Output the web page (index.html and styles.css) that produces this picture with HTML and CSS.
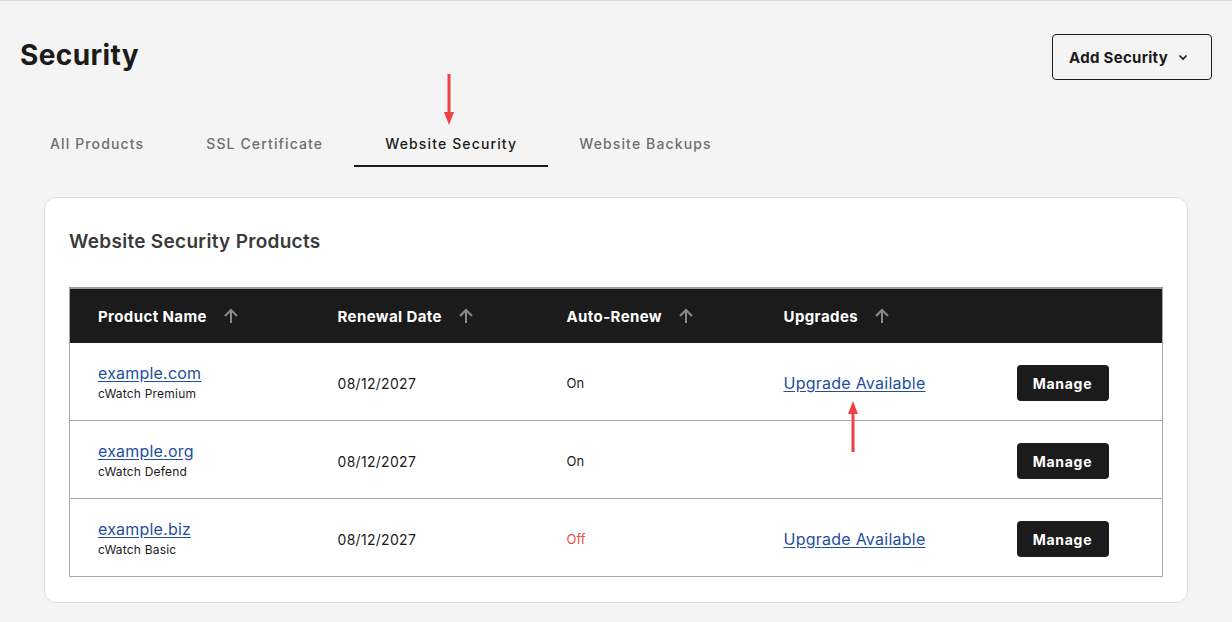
FILE: index.html
```html
<!DOCTYPE html>
<html lang="en">
<head>
    <meta charset="UTF-8">
    <meta name="viewport" content="width=device-width, initial-scale=1.0">
    <title>Security</title>
    <link rel="stylesheet" href="styles.css">
</head>
<body>
    <div class="page">
        <div class="top">
            <h1>Security</h1>
            <button type="button" class="add-btn">Add Security
                <svg width="12" height="12" viewBox="0 0 12 12"><path d="M2.5 4.5 L6 8 L9.5 4.5" fill="none" stroke="#1b1b1b" stroke-width="1.6"/></svg>
            </button>
        </div>

        <div class="tabs">
            <div class="tab">All Products</div>
            <div class="tab">SSL Certificate</div>
            <div class="tab active">Website Security
                <svg class="mark mark-down" width="12" height="52" viewBox="0 0 12 52"><path d="M6 0 V40" stroke="#ef4046" stroke-width="3"/><path d="M1 38 L6 51 L11 38 Z" fill="#ef4046"/></svg>
            </div>
            <div class="tab">Website Backups</div>
        </div>

        <div class="card">
            <h2>Website Security Products</h2>
            <table>
                <colgroup>
                    <col style="width:240px">
                    <col style="width:229px">
                    <col style="width:217px">
                    <col style="width:233px">
                    <col>
                </colgroup>
                <thead>
                    <tr>
                        <th>Product Name <svg class="sort" width="16" height="16" viewBox="0 0 16 16"><path d="M8 15 V2 M2 8 L8 2 L14 8" fill="none" stroke="#8a8a8a" stroke-width="2"/></svg></th>
                        <th>Renewal Date <svg class="sort" width="16" height="16" viewBox="0 0 16 16"><path d="M8 15 V2 M2 8 L8 2 L14 8" fill="none" stroke="#8a8a8a" stroke-width="2"/></svg></th>
                        <th>Auto-Renew <svg class="sort" width="16" height="16" viewBox="0 0 16 16"><path d="M8 15 V2 M2 8 L8 2 L14 8" fill="none" stroke="#8a8a8a" stroke-width="2"/></svg></th>
                        <th>Upgrades <svg class="sort" width="16" height="16" viewBox="0 0 16 16"><path d="M8 15 V2 M2 8 L8 2 L14 8" fill="none" stroke="#8a8a8a" stroke-width="2"/></svg></th>
                        <th></th>
                    </tr>
                </thead>
                <tbody>
                    <tr>
                        <td class="name"><a href="#" class="domain">example.com</a><div class="plan">cWatch Premium</div></td>
                        <td class="date">08/12/2027</td>
                        <td class="renew">On</td>
                        <td><span class="up-wrap"><a href="#" class="upgrade">Upgrade Available</a>
                            <svg class="mark mark-up" width="12" height="52" viewBox="0 0 12 52"><path d="M6 12 V52" stroke="#ef4046" stroke-width="3"/><path d="M1 14 L6 1 L11 14 Z" fill="#ef4046"/></svg></span></td>
                        <td><button type="button" class="manage-btn">Manage</button></td>
                    </tr>
                    <tr>
                        <td class="name"><a href="#" class="domain">example.org</a><div class="plan">cWatch Defend</div></td>
                        <td class="date">08/12/2027</td>
                        <td class="renew">On</td>
                        <td></td>
                        <td><button type="button" class="manage-btn">Manage</button></td>
                    </tr>
                    <tr>
                        <td class="name"><a href="#" class="domain">example.biz</a><div class="plan">cWatch Basic</div></td>
                        <td class="date">08/12/2027</td>
                        <td class="renew off">Off</td>
                        <td><a href="#" class="upgrade">Upgrade Available</a></td>
                        <td><button type="button" class="manage-btn">Manage</button></td>
                    </tr>
                </tbody>
            </table>
        </div>
    </div>
</body>
</html>
```

FILE: styles.css
```css
body{
    margin: 0;
    background-color: #f4f4f4;
    font-family: Inter, "Noto Sans", Arial, sans-serif;
    color: #1b1b1b;
}
.page{
    border-top: 1px solid #d3d8df;
    min-height: 621px;
}
.top{
    display: flex;
    justify-content: space-between;
    align-items: flex-start;
    padding: 33px 20px 0 20px;
}
h1{
    margin: 4px 0 0 0;
    font-size: 28px;
    line-height: 34px;
    font-weight: 700;
    letter-spacing: 0.4px;
    color: #1b1b1b;
}
.add-btn{
    display: flex;
    align-items: center;
    gap: 9px;
    height: 46px;
    width: 160px;
    padding: 0 0 0 16px;
    background: transparent;
    border: 1px solid #1b1b1b;
    border-radius: 4px;
    font-family: inherit;
    font-size: 15px;
    font-weight: 700;
    letter-spacing: 0.3px;
    color: #1b1b1b;
}
.tabs{
    display: flex;
    padding-left: 19px;
    margin-top: 42px;
}
.tab{
    position: relative;
    padding: 12px 31px 11px 31px;
    font-size: 14px;
    line-height: 20px;
    font-weight: 500;
    letter-spacing: 1.13px;
    color: #6e6e6e;
    border-bottom: 2px solid transparent;
}
.tab.active{
    color: #1b1b1b;
    border-bottom-color: #1b1b1b;
}
.mark{
    position: absolute;
}
.mark-down{
    left: 89px;
    top: -48px;
}
.card{
    margin: 30px 44px 0 44px;
    background: #fff;
    border: 1px solid #dcdde0;
    border-radius: 12px;
    padding: 32px 24px 25px 24px;
}
h2{
    margin: 0;
    font-size: 19px;
    line-height: 24px;
    font-weight: 600;
    letter-spacing: 0.3px;
    color: #3a3a3a;
}
table{
    margin-top: 33px;
    width: 100%;
    table-layout: fixed;
    border-collapse: collapse;
    border: 1px solid #a9a9a9;
    border-top: 0;
}
thead th{
    background: #1b1b1b;
    color: #fff;
    border-top: 2px solid #9a9a9a;
    height: 54px;
    padding: 0 0 0 28px;
    text-align: left;
    font-size: 15px;
    font-weight: 700;
    letter-spacing: 0.4px;
    white-space: nowrap;
}
.sort{
    vertical-align: -2px;
    margin-left: 12px;
}
tbody td{
    height: 74px;
    padding: 3px 0 0 28px;
    border-bottom: 1px solid #a9a9a9;
    font-size: 14px;
    color: #1b1b1b;
}
tbody td.name{
    padding-top: 0;
}
.date{
    letter-spacing: 0.3px;
}
.domain{
    font-size: 16px;
    letter-spacing: 0.2px;
    color: #1f4e9e;
    text-decoration: underline;
    text-underline-offset: 2px;
}
.plan{
    font-size: 12px;
    letter-spacing: 0.2px;
    margin-top: 3px;
    color: #1b1b1b;
}
.renew{
    font-size: 13px;
}
.renew.off{
    color: #e8524f;
}
.up-wrap{
    position: relative;
}
.upgrade{
    font-size: 16px;
    letter-spacing: 0.25px;
    color: #1f4e9e;
    text-underline-offset: 2px;
}
.mark-up{
    left: 63px;
    top: 25px;
}
.manage-btn{
    width: 92px;
    height: 36px;
    background: #1b1b1b;
    color: #fff;
    border: 0;
    border-radius: 4px;
    font-family: inherit;
    font-size: 14px;
    font-weight: 700;
    letter-spacing: 0.7px;
}
```
